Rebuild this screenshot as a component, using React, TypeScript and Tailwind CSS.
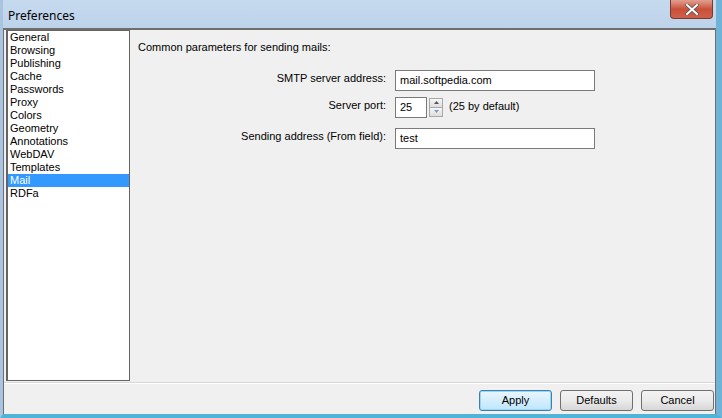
import React from "react";

const items = ["General","Browsing","Publishing","Cache","Passwords","Proxy","Colors","Geometry","Annotations","WebDAV","Templates","Mail","RDFa"];

function Field({ label, children, className = "" }: { label: string; children: React.ReactNode; className?: string }) {
  return (
    <div className={"flex items-center h-[21px] " + className}>
      <div className="w-[257px] text-right pr-[9px] -mt-[4px]">{label}</div>
      {children}
    </div>
  );
}

export default function App() {
  return (
    <div
      className="w-[722px] h-[418px] flex flex-col bg-[#bcd3ea] border-l-[3px] border-r-[6px] border-b-[4px] border-l-[#a9c4e0] border-r-[#6fb3d8] border-b-[#4fb4d8] text-[11px] text-black overflow-hidden"
      style={{ fontFamily: '"Liberation Sans", Arial, sans-serif' }}
    >
      <div className="h-[28px] flex items-start relative bg-gradient-to-b from-[#c6daef] to-[#bdd3ea]">
        <div className="pl-[5px] pt-[7px] text-[12px] text-black" style={{ fontFamily: '"Noto Sans", sans-serif' }}>Preferences</div>
        <div className="absolute right-[3px] top-0 w-[43px] h-[19px] rounded-b-[4px] border border-[#7a3a30] border-t-0 bg-gradient-to-b from-[#e0a090] via-[#c9503a] to-[#d0604a] flex items-center justify-center">
          <svg width="14" height="11" viewBox="0 0 14 11">
            <path d="M2 1 L12 10 M12 1 L2 10" stroke="#555" strokeWidth="3.6" strokeLinecap="square" />
            <path d="M2 1 L12 10 M12 1 L2 10" stroke="#fff" strokeWidth="2" strokeLinecap="square" />
          </svg>
        </div>
      </div>
      <div className="flex-1 flex flex-col bg-[#f0f0f0] border-t-2 border-l border-r border-[#6e6e6e]">
        <div className="flex-1 flex">
          <div className="ml-[2px] w-[124px] h-[351px] bg-white border-2 border-t border-[#646464] border-r border-b leading-[13px]">
            {items.map((it) => (
              <div key={it} className={"h-[13px] pl-[2px] " + (it === "Mail" ? "bg-[#3399ff] text-white" : "")}>{it}</div>
            ))}
          </div>
          <div className="flex-1 pl-[8px] pt-[9px]">
            <div>Common parameters for sending mails:</div>
            <div className="mt-[14px] flex flex-col">
              <Field label="SMTP server address:">
                <div className="w-[200px] h-[21px] bg-white border border-[#7a7a7a] pl-[4px] flex items-center">mail.softpedia.com</div>
              </Field>
              <Field label="Server port:" className="mt-[6px]">
                <div className="w-[32px] h-[21px] bg-white border border-[#7a7a7a] pl-[4px] flex items-center">25</div>
                <div className="ml-[2px] w-[14px] h-[19px] flex flex-col">
                  <div className="flex-1 border border-[#a8a8a8] bg-gradient-to-b from-[#f6f6f6] to-[#dedede] flex items-center justify-center">
                    <svg width="5" height="3" viewBox="0 0 5 3"><path d="M0 3 L2.5 0 L5 3Z" fill="#555"/></svg>
                  </div>
                  <div className="flex-1 border border-[#a8a8a8] border-t-0 bg-gradient-to-b from-[#f6f6f6] to-[#dedede] flex items-center justify-center">
                    <svg width="5" height="3" viewBox="0 0 5 3"><path d="M0 0 L2.5 3 L5 0Z" fill="#7a9cc6"/></svg>
                  </div>
                </div>
                <div className="ml-[6px] -mt-[2px]">(25 by default)</div>
              </Field>
              <Field label="Sending address (From field):" className="mt-[10px]">
                <div className="w-[200px] h-[21px] bg-white border border-[#7a7a7a] pl-[4px] flex items-center">test</div>
              </Field>
            </div>
          </div>
        </div>
        <div className="h-[32px] border-t border-[#d8d8d8] shadow-[inset_0_1px_0_#fff] flex items-center justify-end gap-[8px] pr-[1px] pt-[3px]">
          <button className="w-[73px] h-[21px] rounded-[3px] border border-[#3c7fb1] bg-gradient-to-b from-[#eaf6fd] to-[#bee6fd] shadow-[inset_0_0_0_1px_#9ad6f3]">Apply</button>
          <button className="w-[73px] h-[21px] rounded-[3px] border border-[#707070] bg-gradient-to-b from-[#f2f2f2] via-[#ebebeb] to-[#d6d6d6]">Defaults</button>
          <button className="w-[73px] h-[21px] rounded-[3px] border border-[#707070] bg-gradient-to-b from-[#f2f2f2] via-[#ebebeb] to-[#d6d6d6]">Cancel</button>
        </div>
      </div>
    </div>
  );
}
